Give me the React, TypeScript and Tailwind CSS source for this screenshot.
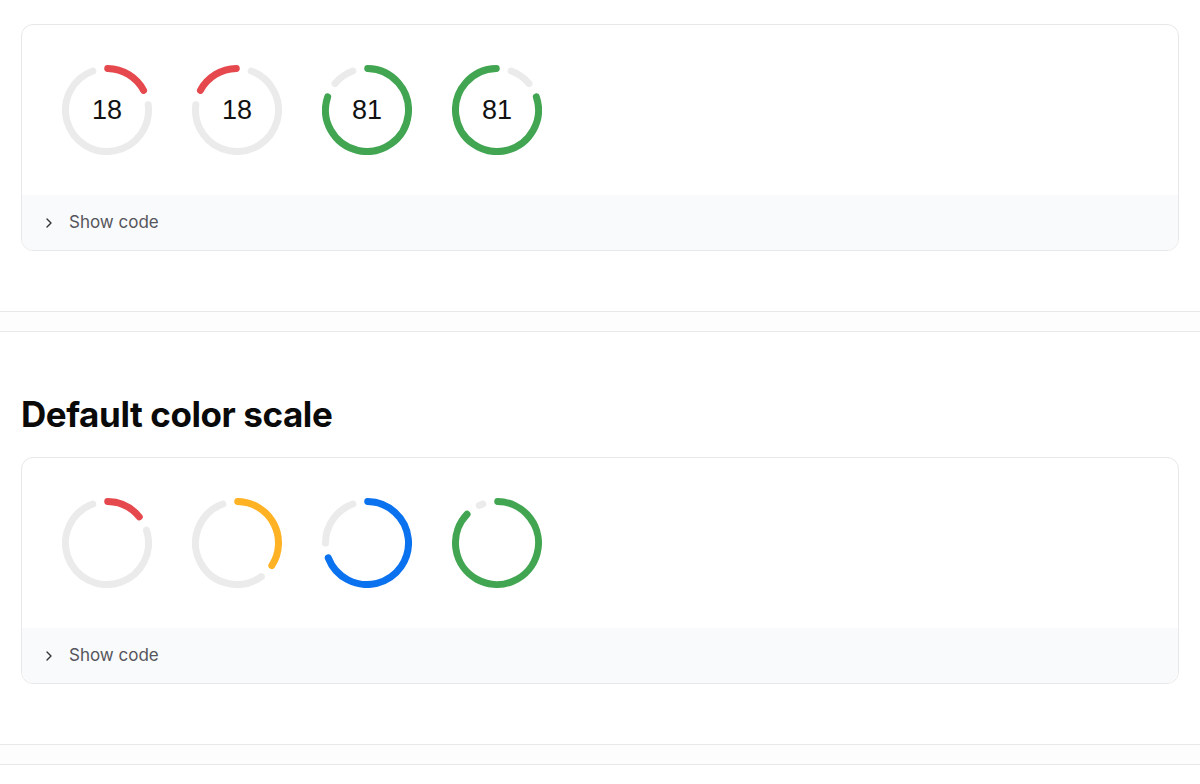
import { ChevronRight } from "lucide-react";

const SIZE = 90;
const STROKE = 7;
const R = SIZE / 2 - STROKE / 2;
const C = SIZE / 2;

// angle in degrees, clockwise from 12 o'clock
function polar(deg: number) {
  const rad = (deg * Math.PI) / 180;
  return [C + R * Math.sin(rad), C - R * Math.cos(rad)];
}

function arc(from: number, to: number) {
  if (to <= from) return "";
  const [x1, y1] = polar(from);
  const [x2, y2] = polar(to);
  const large = to - from > 180 ? 1 : 0;
  return `M ${x1} ${y1} A ${R} ${R} 0 ${large} 1 ${x2} ${y2}`;
}

function colorFor(value: number) {
  if (value < 25) return "#e5484d";
  if (value < 50) return "#ffb224";
  if (value < 75) return "#0a72ef";
  return "#41a552";
}

const Gauge = ({
  value,
  showValue = false,
  reverse = false,
}: {
  value: number;
  showValue?: boolean;
  reverse?: boolean;
}) => {
  const end = (value / 100) * 360;
  const primary = arc(1, end - 3);
  const secondary = arc(end + 18, 340);
  const color = colorFor(value);

  return (
    <div className="relative h-[90px] w-[90px]">
      <svg width={SIZE} height={SIZE} viewBox={`0 0 ${SIZE} ${SIZE}`}>
        <g transform={reverse ? `translate(${SIZE} 0) scale(-1 1)` : undefined}>
          {secondary && (
            <path
              d={secondary}
              fill="none"
              stroke="#ebebeb"
              strokeWidth={STROKE}
              strokeLinecap="round"
            />
          )}
          <path
            d={primary}
            fill="none"
            stroke={color}
            strokeWidth={STROKE}
            strokeLinecap="round"
          />
        </g>
      </svg>
      {showValue && (
        <div className="absolute inset-0 flex items-center justify-center font-['Liberation_Sans',Arial,sans-serif] text-[27px] text-[#111]">
          {value}
        </div>
      )}
    </div>
  );
};

const Example = ({ children }: { children: React.ReactNode }) => (
  <div className="overflow-hidden rounded-xl border border-[#e8e8ea] bg-white">
    <div className="flex gap-10 px-10 pt-10 pb-10">{children}</div>
    <div className="flex h-[55px] items-center gap-3 bg-[#f9fafb] pl-[19px] font-['Inter',sans-serif] text-[17px] text-[#55555b]">
      <ChevronRight size={16} strokeWidth={2} className="text-[#333]" />
      <span>Show code</span>
    </div>
  </div>
);

const Divider = () => (
  <div className="h-[21px] border-y border-[#e8e8ea] bg-[#fdfdfd]" />
);

export default function App() {
  return (
    <div className="min-h-[784px] w-full bg-white font-['Inter',sans-serif]">
      <div className="px-[21px] pt-[24px] pb-[60px]">
        <Example>
          <Gauge value={18} showValue />
          <Gauge value={18} showValue reverse />
          <Gauge value={81} showValue />
          <Gauge value={81} showValue reverse />
        </Example>
      </div>
      <Divider />
      <div className="px-[21px] pt-[61px] pb-[60px]">
        <h2 className="mb-[22px] text-[35px] font-bold leading-[42px] tracking-[-0.012em] text-[#0a0a0a]">
          Default color scale
        </h2>
        <Example>
          <Gauge value={15} />
          <Gauge value={35} />
          <Gauge value={70} />
          <Gauge value={88} />
        </Example>
      </div>
      <Divider />
    </div>
  );
}
